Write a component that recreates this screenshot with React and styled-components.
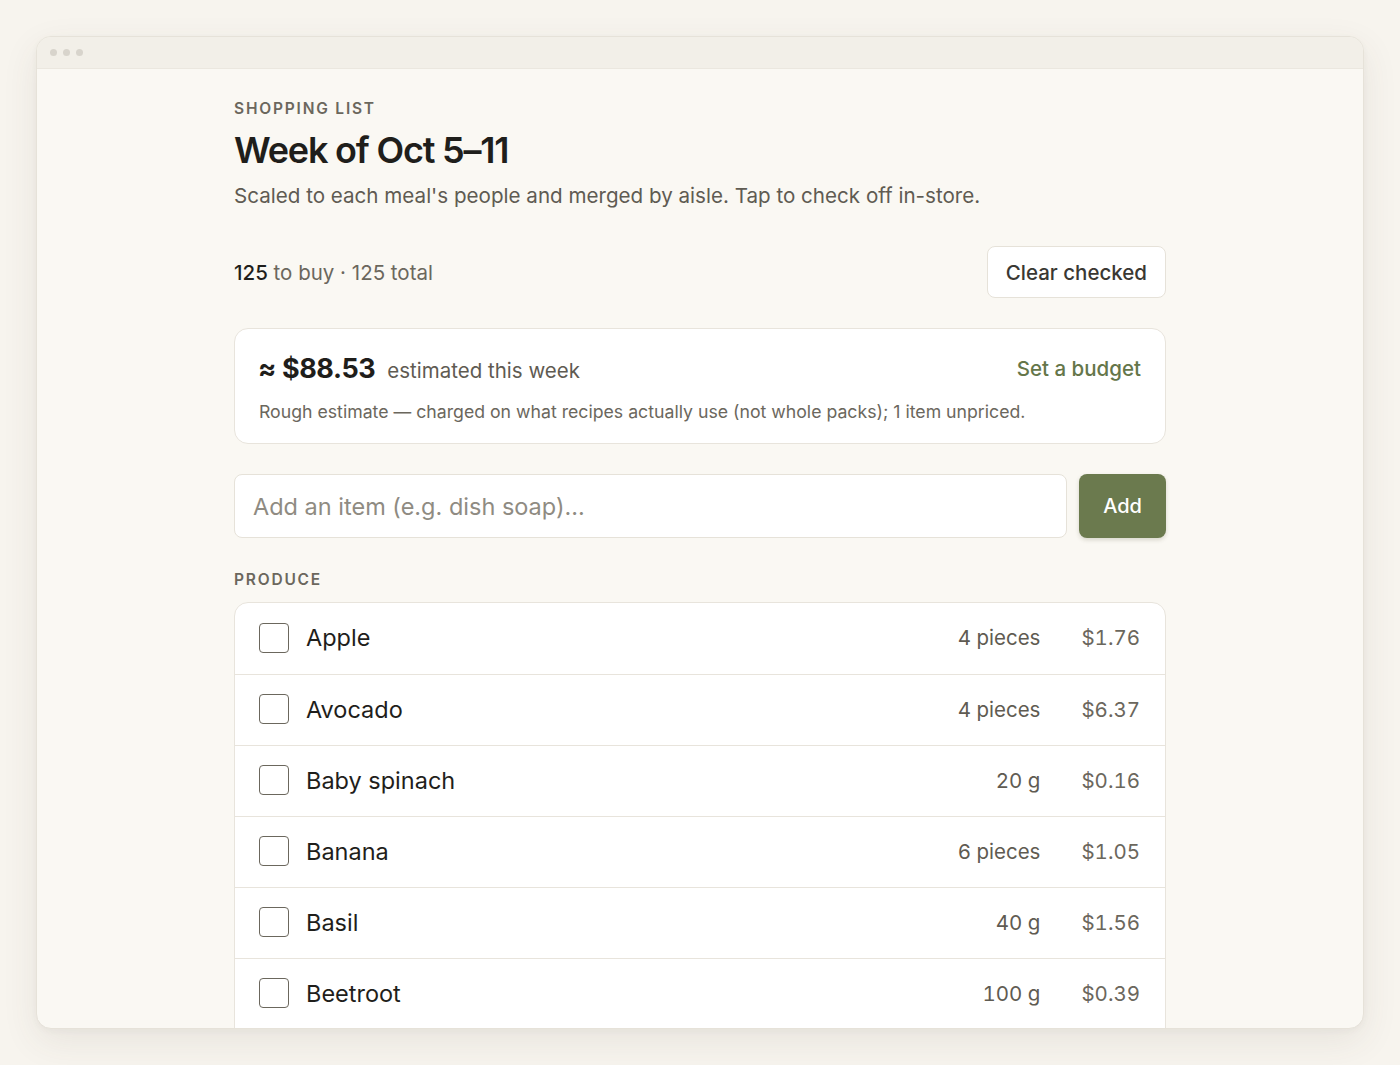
import React from "react";
import styled, { createGlobalStyle } from "styled-components";

const Global = createGlobalStyle`
  html, body { margin: 0; padding: 0; background: #f7f4ee; }
  body { font-family: Inter, "Noto Sans", sans-serif; color: #1f1e1b; -webkit-font-smoothing: antialiased; }
  * { box-sizing: border-box; }
`;

const Page = styled.div`
  height: 1065px;
  padding: 36px;
  background: #f7f4ee;
`;

const Window = styled.div`
  height: 993px;
  background: #faf8f3;
  border: 1px solid #e6e2d9;
  border-radius: 15px;
  overflow: hidden;
  box-shadow: 0 12px 36px rgba(80, 70, 50, 0.09), 0 2px 6px rgba(80, 70, 50, 0.04);
  display: flex;
  flex-direction: column;
`;

const TitleBar = styled.div`
  height: 32px;
  flex: none;
  background: #f2efe8;
  border-bottom: 1px solid #ebe7df;
  display: flex;
  align-items: center;
  gap: 6px;
  padding-left: 13px;
`;

const Dot = styled.span`
  width: 7px;
  height: 7px;
  border-radius: 50%;
  background: #d8d4cc;
`;

const Content = styled.main`
  width: 932px;
  margin: 0 auto;
  padding-top: 30px;
  display: flex;
  flex-direction: column;
`;

const Eyebrow = styled.div`
  font-size: 15.5px;
  line-height: 20px;
  font-weight: 600;
  letter-spacing: 1.8px;
  text-transform: uppercase;
  color: #6b675d;
  margin-top: ${(p) => p.$mt || 0}px;
`;

const Title = styled.h1`
  margin: 9px 0 0;
  font-size: 36px;
  line-height: 44px;
  font-weight: 600;
  letter-spacing: -1.2px;
  color: #1f1e1b;
`;

const Sub = styled.p`
  margin: 10px 0 0;
  font-size: 20.6px;
  line-height: 28px;
  color: #5f5b52;
`;

const StatsRow = styled.div`
  margin-top: 36px;
  display: flex;
  align-items: center;
  justify-content: space-between;
`;

const Stats = styled.div`
  font-size: 20.5px;
  color: #6b675d;
  b { font-weight: 500; color: #1f1e1b; }
`;

const GhostButton = styled.button`
  height: 52px;
  padding: 0 18px;
  background: #fff;
  border: 1px solid #e6e2d9;
  border-radius: 8px;
  font-family: inherit;
  font-size: 20.5px;
  font-weight: 500;
  color: #3a3833;
`;

const EstimateCard = styled.section`
  margin-top: 30px;
  background: #fff;
  border: 1px solid #e8e4dc;
  border-radius: 14px;
  padding: 21px 24px 19px;
`;

const EstTop = styled.div`
  display: flex;
  align-items: center;
  justify-content: space-between;
  height: 36px;
`;

const EstLeft = styled.div`
  display: flex;
  align-items: baseline;
  gap: 12px;
  margin-left: -1px;
`;

const Amount = styled.span`
  font-size: 27px;
  font-weight: 700;
  color: #1f1e1b;
  letter-spacing: -0.4px;
`;

const EstLabel = styled.span`
  font-size: 20.5px;
  color: #5f5b52;
`;

const LinkButton = styled.button`
  background: none;
  border: 0;
  padding: 0;
  font-family: inherit;
  font-size: 20.5px;
  font-weight: 500;
  color: #65764a;
`;

const EstNote = styled.div`
  margin-top: 14px;
  font-size: 17.7px;
  line-height: 24px;
  color: #6b675d;
  white-space: nowrap;
`;

const AddRow = styled.form`
  margin-top: 30px;
  display: flex;
  gap: 12px;
`;

const Input = styled.input`
  flex: 1;
  height: 64px;
  border: 1px solid #e6e2d9;
  border-radius: 8px;
  background: #fff;
  padding: 0 18px;
  font-family: inherit;
  font-size: 23.5px;
  color: #1f1e1b;
  outline: none;
  &::placeholder { color: #8f8b82; }
`;

const PrimaryButton = styled.button`
  width: 87px;
  height: 64px;
  border: 0;
  border-radius: 8px;
  background: #6b7a4e;
  color: #fff;
  font-family: inherit;
  font-size: 20px;
  font-weight: 500;
  box-shadow: 0 2px 4px rgba(60, 60, 30, 0.18);
`;

const List = styled.ul`
  list-style: none;
  margin: 12px 0 0;
  padding: 0;
  background: #fff;
  border: 1px solid #e8e4dc;
  border-radius: 14px 14px 0 0;
`;

const Row = styled.li`
  height: 71px;
  display: flex;
  align-items: center;
  padding: 0 25px 2px 24px;
  border-top: ${(p) => (p.$first ? "0" : "1px solid #e8e4dc")};
`;

const Check = styled.span`
  width: 30px;
  height: 30px;
  flex: none;
  border: 1.5px solid #6b675d;
  border-radius: 4px;
  background: #fff;
`;

const Name = styled.span`
  margin-left: 17px;
  flex: 1;
  font-size: 23.5px;
  color: #1f1e1b;
`;

const Qty = styled.span`
  font-size: 20.5px;
  color: #5f5b52;
  font-variant-numeric: tabular-nums;
`;

const Price = styled.span`
  margin-left: 41px;
  min-width: 58px;
  text-align: right;
  font-size: 20.5px;
  color: #6b675d;
  font-variant-numeric: tabular-nums;
`;

const items = [
  ["Apple", "4 pieces", "$1.76"],
  ["Avocado", "4 pieces", "$6.37"],
  ["Baby spinach", "20 g", "$0.16"],
  ["Banana", "6 pieces", "$1.05"],
  ["Basil", "40 g", "$1.56"],
  ["Beetroot", "100 g", "$0.39"],
];

export default function App() {
  return (
    <>
      <Global />
      <Page>
        <Window>
          <TitleBar>
            <Dot />
            <Dot />
            <Dot />
          </TitleBar>
          <Content>
            <Eyebrow>Shopping list</Eyebrow>
            <Title>Week of Oct 5–11</Title>
            <Sub>Scaled to each meal's people and merged by aisle. Tap to check off in-store.</Sub>
            <StatsRow>
              <Stats>
                <b>125</b> to buy · 125 total
              </Stats>
              <GhostButton type="button">Clear checked</GhostButton>
            </StatsRow>
            <EstimateCard>
              <EstTop>
                <EstLeft>
                  <Amount>≈ $88.53</Amount>
                  <EstLabel>estimated this week</EstLabel>
                </EstLeft>
                <LinkButton type="button">Set a budget</LinkButton>
              </EstTop>
              <EstNote>
                Rough estimate — charged on what recipes actually use (not whole packs); 1 item unpriced.
              </EstNote>
            </EstimateCard>
            <AddRow onSubmit={(e) => e.preventDefault()}>
              <Input placeholder="Add an item (e.g. dish soap)..." />
              <PrimaryButton type="submit">Add</PrimaryButton>
            </AddRow>
            <Eyebrow $mt={32}>Produce</Eyebrow>
            <List>
              {items.map(([n, q, p], i) => (
                <Row key={n} $first={i === 0}>
                  <Check />
                  <Name>{n}</Name>
                  <Qty>{q}</Qty>
                  <Price>{p}</Price>
                </Row>
              ))}
            </List>
          </Content>
        </Window>
      </Page>
    </>
  );
}
